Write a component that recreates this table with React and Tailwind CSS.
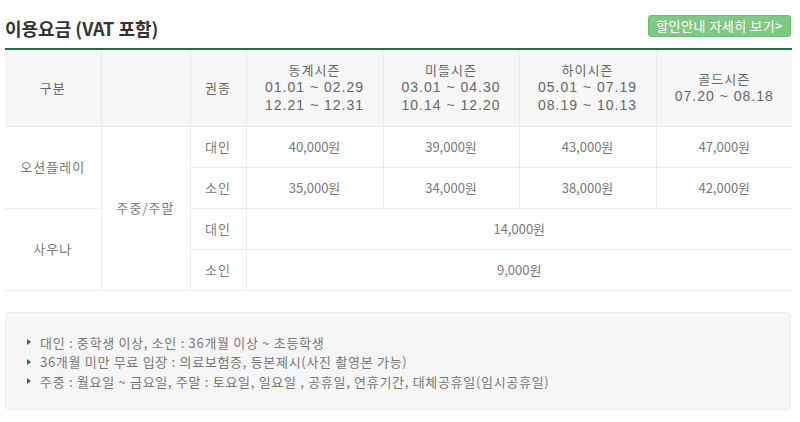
import React from "react";

const seasons = [
  { name: "동계시즌", dates: ["01.01 ~ 02.29", "12.21 ~ 12.31"] },
  { name: "미들시즌", dates: ["03.01 ~ 04.30", "10.14 ~ 12.20"] },
  { name: "하이시즌", dates: ["05.01 ~ 07.19", "08.19 ~ 10.13"] },
  { name: "골드시즌", dates: ["07.20 ~ 08.18"] },
];

const notes = [
  "대인 : 중학생 이상, 소인 : 36개월 이상 ~ 초등학생",
  "36개월 미만 무료 입장 : 의료보험증, 등본제시(사진 촬영본 가능)",
  "주중 : 월요일 ~ 금요일, 주말 : 토요일, 일요일 , 공휴일, 연휴기간, 대체공휴일(임시공휴일)",
];

const cell = "border-b border-[#ececec] text-center align-middle";
const vline = "border-r border-[#ececec]";

export default function App() {
  return (
    <div
      className="w-[800px] h-[422px] bg-white text-[#666]"
      style={{ fontFamily: '"Noto Sans CJK KR", "Noto Sans", sans-serif' }}
    >
      {/* 타이틀 */}
      <div className="flex items-start justify-between h-[48px] pl-[5px] pr-[9px]">
        <h2 className="mt-[15px] text-[18px] leading-[26px] font-bold text-[#333]">이용요금 (VAT 포함)</h2>
        <button className="mt-[15px] h-[22px] w-[143px] rounded-[3px] border border-[#6cbf6e] bg-[#80c984] text-white text-[13px] leading-[20px] tracking-[0.5px]">
          할인안내 자세히 보기&gt;
        </button>
      </div>

      <div className="pl-[5px]">
        <table className="w-[787px] table-fixed border-collapse border-t-2 border-[#236f47] text-[13px]">
          <colgroup>
            <col className="w-[96px]" />
            <col className="w-[89px]" />
            <col className="w-[56px]" />
            <col className="w-[137px]" />
            <col className="w-[136px]" />
            <col className="w-[137px]" />
            <col className="w-[136px]" />
          </colgroup>
          <thead>
            <tr className="h-[77px] bg-[#f7f7f7]">
              <th className={`${cell} ${vline} font-normal tracking-[1px]`}>구분</th>
              <th className={`${cell} ${vline}`}></th>
              <th className={`${cell} ${vline} font-normal tracking-[1px]`}>권종</th>
              {seasons.map((s, i) => (
                <th key={s.name} className={`${cell} ${i < 3 ? vline : ""} font-normal`}>
                  <div className="tracking-[1px] leading-[18px]">{s.name}</div>
                  {s.dates.map((d) => (
                    <div
                      key={d}
                      className="text-[14px] leading-[17.5px] tracking-[1px] font-['Liberation_Sans',sans-serif]"
                    >
                      {d}
                    </div>
                  ))}
                </th>
              ))}
            </tr>
          </thead>
          <tbody className="text-[#7a7a7a]">
            <tr className="h-[41px]">
              <td rowSpan={2} className={`${cell} ${vline} tracking-[1px]`}>오션플레이</td>
              <td rowSpan={4} className={`${cell} ${vline} tracking-[1px]`}>주중/주말</td>
              <td className={`${cell} ${vline} tracking-[1px]`}>대인</td>
              <td className={`${cell} ${vline}`}>40,000원</td>
              <td className={`${cell} ${vline}`}>39,000원</td>
              <td className={`${cell} ${vline}`}>43,000원</td>
              <td className={cell}>47,000원</td>
            </tr>
            <tr className="h-[41px]">
              <td className={`${cell} ${vline} tracking-[1px]`}>소인</td>
              <td className={`${cell} ${vline}`}>35,000원</td>
              <td className={`${cell} ${vline}`}>34,000원</td>
              <td className={`${cell} ${vline}`}>38,000원</td>
              <td className={cell}>42,000원</td>
            </tr>
            <tr className="h-[41px]">
              <td rowSpan={2} className={`${cell} ${vline} tracking-[1px]`}>사우나</td>
              <td className={`${cell} ${vline} tracking-[1px]`}>대인</td>
              <td colSpan={4} className={cell}>14,000원</td>
            </tr>
            <tr className="h-[41px]">
              <td className={`${cell} ${vline} tracking-[1px]`}>소인</td>
              <td colSpan={4} className={cell}>9,000원</td>
            </tr>
          </tbody>
        </table>
      </div>

      {/* 안내 */}
      <div className="ml-[5px] mt-[21px] w-[786px] h-[98px] rounded-[4px] border border-[#eeeeee] bg-[#f6f6f6] px-[21px] py-[20px]">
        <ul className="text-[13px] leading-[19.5px] text-[#777] tracking-[0.7px]">
          {notes.map((n) => (
            <li key={n} className="flex items-center gap-[9px]">
              <span className="w-0 h-0 border-y-[3px] border-y-transparent border-l-[4px] border-l-[#2c6e49]" />
              <span>{n}</span>
            </li>
          ))}
        </ul>
      </div>
    </div>
  );
}
